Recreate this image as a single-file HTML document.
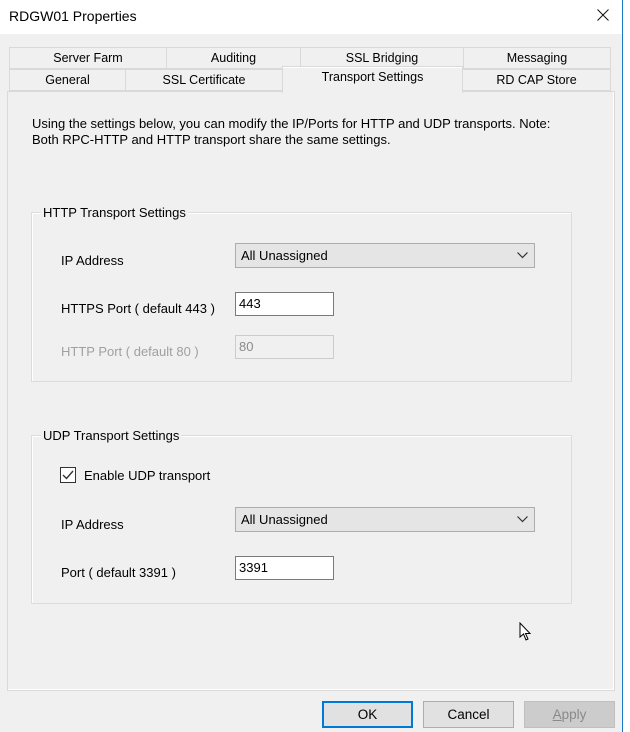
<!DOCTYPE html>
<html><head><style>
*{box-sizing:border-box;margin:0;padding:0}
body{width:630px;height:732px;background:#fff;font-family:"Liberation Sans",sans-serif;font-size:13px;color:#000;position:relative;overflow:hidden}
.win{position:absolute;left:0;top:0;width:623px;height:732px;background:#f0f0f0;border-right:1px solid #1979ca}
.title{position:absolute;left:0;top:0;width:622px;height:34px;background:#fff}
.title span{position:absolute;left:9px;top:8px;font-size:14px}
.x{position:absolute;left:597px;top:9px}
.a{position:absolute}
.tab{position:absolute;height:22px;border:1px solid #d9d9d9;background:#f0f0f0;text-align:center;line-height:20px;font-size:12.5px}
.panel{position:absolute;left:7px;top:91px;width:608px;height:600px;background:#f0f0f0;border:1px solid #d9d9d9;box-shadow:inset -1px -1px 0 #fff}
.grp{position:absolute;border:1px solid #dcdcdc;box-shadow:inset 1px 1px 0 #fff}
.grp .lg{position:absolute;left:9px;top:-8px;background:#f0f0f0;padding:0 2px;font-size:13px}
.combo{position:absolute;width:300px;height:25px;background:#e5e5e5;border:1px solid #adadad;padding:4px 5px;font-size:13px}
.combo svg{position:absolute;right:6px;top:8px}
.box{position:absolute;width:99px;height:24px;background:#fff;border:1px solid #7a7a7a;padding:3px 3px;font-size:13px}
.box.d{background:#f0f0f0;border-color:#ccc;color:#8a8a8a}
.lbl{position:absolute;font-size:13px}
.btn{position:absolute;top:701px;width:91px;height:27px;border:1px solid #adadad;background:#e1e1e1;text-align:center;line-height:25px;font-size:13.5px}
</style></head><body>
<div class="win">
<div class="title"><span>RDGW01 Properties</span><svg class="x" width="12" height="12"><path d="M0.5 0.5L11.5 11.5M11.5 0.5L0.5 11.5" stroke="#111" stroke-width="1"/></svg></div>
<div class="tab" style="left:9px;top:47px;width:158px">Server Farm</div>
<div class="tab" style="left:166px;top:47px;width:135px">Auditing</div>
<div class="tab" style="left:300px;top:47px;width:164px">SSL Bridging</div>
<div class="tab" style="left:463px;top:47px;width:148px">Messaging</div>
<div class="tab" style="left:9px;top:69px;width:117px">General</div>
<div class="tab" style="left:125px;top:69px;width:158px">SSL Certificate</div>
<div class="tab" style="left:462px;top:69px;width:149px">RD CAP Store</div>
<div class="panel">
<div class="a" style="left:24px;top:24px;width:545px;line-height:16px;font-size:13px">Using the settings below, you can modify the IP/Ports for HTTP and UDP transports. Note: Both RPC-HTTP and HTTP transport share the same settings.</div>
</div>
<div class="tab" style="left:282px;top:66px;width:181px;height:27px;border-bottom:none;z-index:2;background:#f0f0f0;border-color:#d9d9d9;box-shadow:inset 0 1px 0 #fff">Transport Settings</div>
<div class="grp" style="left:31px;top:212px;width:541px;height:170px"><span class="lg">HTTP Transport Settings</span></div>
<div class="lbl" style="left:61px;top:253px">IP Address</div>
<div class="combo" style="left:235px;top:243px">All Unassigned<svg width="11" height="7"><path d="M0.5 0.5L5.5 5.5L10.5 0.5" fill="none" stroke="#333" stroke-width="1.2"/></svg></div>
<div class="lbl" style="left:61px;top:301px">HTTPS Port ( default 443 )</div>
<div class="box" style="left:235px;top:292px">443</div>
<div class="lbl" style="left:61px;top:344px;color:#a0a0a0">HTTP Port ( default 80 )</div>
<div class="box d" style="left:235px;top:335px">80</div>
<div class="grp" style="left:31px;top:435px;width:541px;height:169px"><span class="lg">UDP Transport Settings</span></div>
<div class="a" style="left:60px;top:467px;width:16px;height:16px;border:1px solid #333;background:#fff"><svg width="14" height="14" style="position:absolute;left:0;top:0"><path d="M2 7L5.5 10.5L12 3" fill="none" stroke="#333" stroke-width="1.4"/></svg></div>
<div class="lbl" style="left:84px;top:468px">Enable UDP transport</div>
<div class="lbl" style="left:61px;top:517px">IP Address</div>
<div class="combo" style="left:235px;top:507px">All Unassigned<svg width="11" height="7"><path d="M0.5 0.5L5.5 5.5L10.5 0.5" fill="none" stroke="#333" stroke-width="1.2"/></svg></div>
<div class="lbl" style="left:61px;top:565px">Port ( default 3391 )</div>
<div class="box" style="left:235px;top:556px">3391</div>
<svg class="a" style="left:519px;top:622px" width="14" height="20"><path d="M1 1L1 15L4.5 12L7 18L9 17L6.5 11.5L11 11.5Z" fill="#fff" stroke="#000" stroke-width="1"/></svg>
<div class="btn" style="left:322px;border:2px solid #0078d7;line-height:23px">OK</div>
<div class="btn" style="left:423px">Cancel</div>
<div class="btn" style="left:524px;background:#cccccc;border-color:#bfbfbf;color:#8a8a8a"><u>A</u>pply</div>
</div>
</body></html>
